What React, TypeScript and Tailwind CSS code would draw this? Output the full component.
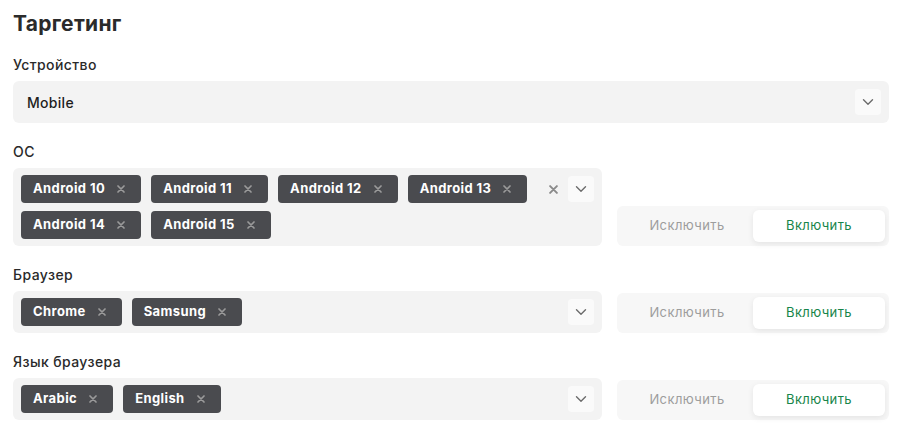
import React from 'react';

const font = { fontFamily: 'Inter, "Noto Sans", sans-serif' };

function Chevron() {
  return (
    <div className="flex h-[26px] w-[26px] shrink-0 items-center justify-center rounded bg-[#fafafa]">
      <svg width="12" height="8" viewBox="0 0 12 8" fill="none">
        <path d="M1.5 1.8 6 6.2l4.5-4.4" stroke="#6b6b6b" strokeWidth="1.4" strokeLinecap="round" strokeLinejoin="round" />
      </svg>
    </div>
  );
}

function Cross({ color = '#9a9a9a', size = 8 }: { color?: string; size?: number }) {
  return (
    <svg width={size} height={size} viewBox="0 0 8 8" fill="none">
      <path d="M1 1l6 6M7 1 1 7" stroke={color} strokeWidth="1.7" strokeLinecap="round" />
    </svg>
  );
}

function Tag({ label }: { label: string }) {
  return (
    <div className="flex h-[28px] items-center gap-[12px] rounded-[4px] bg-[#4a4b4f] pl-[12px] pr-[16px] text-[13px] font-bold tracking-[0.4px] text-white">
      <span>{label}</span>
      <Cross />
    </div>
  );
}

function Toggle() {
  return (
    <div className="flex h-[40px] w-[272px] shrink-0 items-center rounded-md bg-[#f7f7f7] p-[4px] text-[13px] tracking-[0.4px]">
      <div className="flex h-[32px] flex-1 items-center justify-center text-[#9d9d9d]">Исключить</div>
      <div className="flex h-[32px] w-[132px] items-center justify-center rounded-md bg-white text-[#17854a] shadow-[0_2px_6px_rgba(0,0,0,0.08)]">
        Включить
      </div>
    </div>
  );
}

function MultiRow({ label, tags, clear }: { label: string; tags: string[]; clear?: boolean }) {
  return (
    <div className="flex flex-col gap-[6px]">
      <div className="text-[14px] font-medium tracking-[0.4px] text-[#2a2a2a]">{label}</div>
      <div className="flex items-end gap-[15px]">
        <div className="flex w-[589px] shrink-0 items-start rounded-md bg-[#f3f3f3] px-[8px] py-[7px]">
          <div className="flex flex-1 flex-wrap gap-x-[10px] gap-y-[8px]">
            {tags.map((t) => (
              <Tag key={t} label={t} />
            ))}
          </div>
          <div className="flex h-[28px] items-center gap-[10px]">
            {clear && <Cross color="#8a8a8a" size={9} />}
            <Chevron />
          </div>
        </div>
        <Toggle />
      </div>
    </div>
  );
}

export default function App() {
  return (
    <div className="h-[441px] w-[900px] bg-white pl-[13px] pr-[11px] pt-[10px] text-[#2a2a2a]" style={font}>
      <h1 className="text-[21px] font-bold leading-[28px] tracking-[0.3px] text-[#2b2b2b]">Таргетинг</h1>
      <div className="mt-[16px] flex flex-col gap-[18px]">
        <div className="flex flex-col gap-[6px]">
          <div className="text-[14px] font-medium tracking-[0.4px]">Устройство</div>
          <div className="flex h-[42px] w-[876px] items-center justify-between rounded-md bg-[#f3f3f3] pl-[14px] pr-[8px]">
            <span className="text-[14px] font-medium tracking-[0.3px] text-[#1e1e1e]">Mobile</span>
            <Chevron />
          </div>
        </div>
        <MultiRow
          label="ОС"
          clear
          tags={['Android 10', 'Android 11', 'Android 12', 'Android 13', 'Android 14', 'Android 15']}
        />
        <MultiRow label="Браузер" tags={['Chrome', 'Samsung']} />
        <MultiRow label="Язык браузера" tags={['Arabic', 'English']} />
      </div>
    </div>
  );
}
